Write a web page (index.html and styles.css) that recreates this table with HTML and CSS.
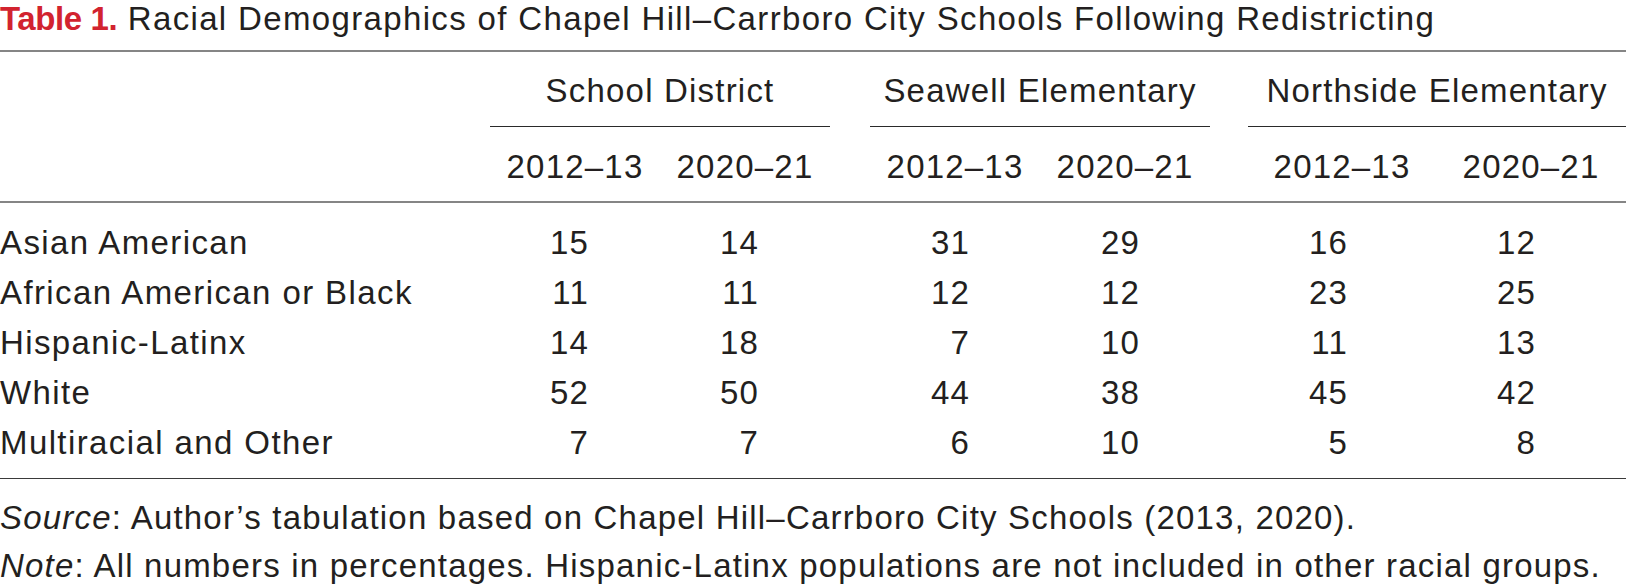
FILE: index.html
```html
<!DOCTYPE html>
<html lang="en">
<head>
<meta charset="utf-8">
<title>Table 1</title>
<link rel="stylesheet" href="styles.css">
</head>
<body>
<figure class="fig">
  <h1 class="caption"><span class="label">Table 1.</span> Racial Demographics of Chapel Hill–Carrboro City Schools Following Redistricting</h1>
  <table class="data">
    <colgroup>
      <col class="c-label">
      <col class="c-a"><col class="c-a">
      <col class="c-gap1">
      <col class="c-a"><col class="c-a">
      <col class="c-gap2">
      <col class="c-b1"><col class="c-b2">
    </colgroup>
    <thead>
      <tr class="groups">
        <th></th>
        <th colspan="2" class="span">School District</th>
        <th></th>
        <th colspan="2" class="span">Seawell Elementary</th>
        <th></th>
        <th colspan="2" class="span">Northside Elementary</th>
      </tr>
      <tr class="years">
        <th></th>
        <th>2012–13</th><th>2020–21</th>
        <th></th>
        <th>2012–13</th><th>2020–21</th>
        <th></th>
        <th>2012–13</th><th>2020–21</th>
      </tr>
    </thead>
    <tbody>
      <tr>
        <td class="name">Asian American</td>
        <td class="n n1">15</td><td class="n n1">14</td><td></td>
        <td class="n n2">31</td><td class="n n2">29</td><td></td>
        <td class="n n3">16</td><td class="n n4">12</td>
      </tr>
      <tr>
        <td class="name">African American or Black</td>
        <td class="n n1">11</td><td class="n n1">11</td><td></td>
        <td class="n n2">12</td><td class="n n2">12</td><td></td>
        <td class="n n3">23</td><td class="n n4">25</td>
      </tr>
      <tr>
        <td class="name">Hispanic-Latinx</td>
        <td class="n n1">14</td><td class="n n1">18</td><td></td>
        <td class="n n2">7</td><td class="n n2">10</td><td></td>
        <td class="n n3">11</td><td class="n n4">13</td>
      </tr>
      <tr>
        <td class="name">White</td>
        <td class="n n1">52</td><td class="n n1">50</td><td></td>
        <td class="n n2">44</td><td class="n n2">38</td><td></td>
        <td class="n n3">45</td><td class="n n4">42</td>
      </tr>
      <tr class="last">
        <td class="name">Multiracial and Other</td>
        <td class="n n1">7</td><td class="n n1">7</td><td></td>
        <td class="n n2">6</td><td class="n n2">10</td><td></td>
        <td class="n n3">5</td><td class="n n4">8</td>
      </tr>
    </tbody>
  </table>
  <div class="notes">
    <p><em>Source</em>: Author’s tabulation based on Chapel Hill–Carrboro City Schools (2013, 2020).</p>
    <p><em>Note</em>: All numbers in percentages. Hispanic-Latinx populations are not included in other racial groups.</p>
  </div>
</figure>
</body>
</html>
```
FILE: styles.css
```css
html, body {
  margin: 0;
  padding: 0;
  background: #ffffff;
  overflow: hidden;
}

body {
  font-family: "Liberation Sans", Arial, sans-serif;
  font-size: 33px;
  color: #231f20;
  letter-spacing: 1.2px;
}

.fig {
  margin: 0;
  width: 1626px;
}

.caption {
  margin: 0 0 13px;
  font-size: 33px;
  font-weight: normal;
  line-height: 37px;
  letter-spacing: 1.35px;
  white-space: nowrap;
}

.caption .label {
  color: #d2232f;
  font-weight: bold;
  letter-spacing: -0.4px;
}

.data {
  width: 1626px;
  table-layout: fixed;
  border-collapse: collapse;
  border-top: 2px solid #858585;
  border-bottom: 1px solid #3a3a3a;
}

.c-label { width: 490px; }
.c-a { width: 170px; }
.c-gap1 { width: 40px; }
.c-gap2 { width: 38px; }
.c-b1 { width: 188px; }
.c-b2 { width: 190px; }

.data th {
  font-weight: normal;
  text-align: center;
  line-height: 36px;
  white-space: nowrap;
  padding: 0;
}

.groups th {
  padding: 21px 0 17px;
}

.groups th.span {
  border-bottom: 1px solid #2a2a2a;
}

.years th {
  padding: 22px 0 16px;
  border-bottom: 2px solid #858585;
}

.data td {
  padding: 0;
  line-height: 50px;
  white-space: nowrap;
}

.data tbody tr:first-child td {
  padding-top: 15px;
}

.data tbody tr.last td {
  padding-bottom: 10px;
}

.name {
  text-align: left;
  letter-spacing: 1.4px;
}

.n {
  text-align: right;
}

.n1 { padding-right: 71px !important; }
.n2 { padding-right: 70px !important; }
.n3 { padding-right: 88px !important; }
.n4 { padding-right: 90px !important; }

.notes {
  padding-top: 15px;
}

.notes p {
  margin: 0;
  line-height: 48px;
  white-space: nowrap;
}
```
